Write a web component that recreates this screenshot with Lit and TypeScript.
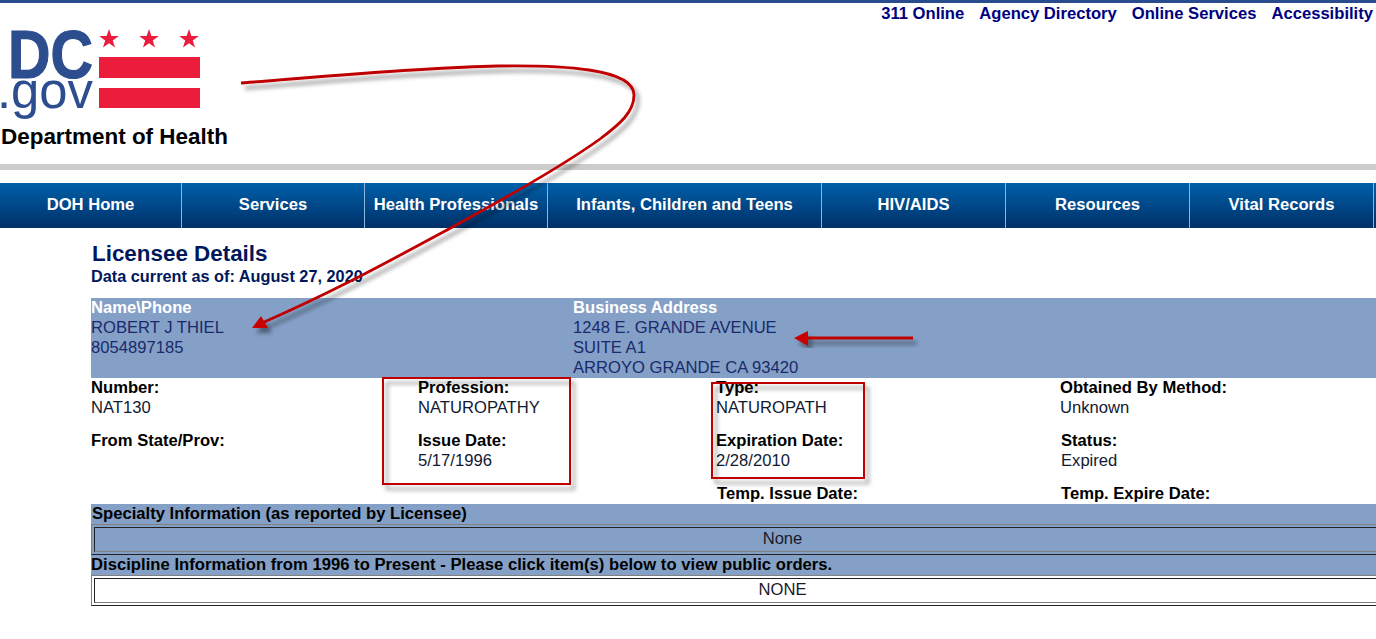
import { LitElement, html, css } from "lit";
import { customElement } from "lit/decorators.js";

const navItems: [string, number][] = [
  ["DOH Home", 182],
  ["Services", 183],
  ["Health Professionals", 183],
  ["Infants, Children and Teens", 274],
  ["HIV/AIDS", 184],
  ["Resources", 184],
  ["Vital Records", 184],
];

@customElement("app-root")
export class AppRoot extends LitElement {
  static styles = css`
    :host {
      display: block;
      position: relative;
      width: 100%;
      height: 639px;
      overflow: hidden;
      background: #fff;
      font-family: "Liberation Sans", Arial, sans-serif;
      font-size: 16.62px;
      line-height: 20px;
      color: #000;
    }
    .topbar { height: 3px; background: #2a4b8d; }
    .toplinks {
      display: flex;
      justify-content: flex-end;
      gap: 15px;
      height: 22px;
      padding: 0 3px 0 0;
      font-weight: bold;
      color: #00007f;
      line-height: 21px;
    }
    .logo { display: block; width: 210px; height: 95px; overflow: visible; }
    .logo .dc {
      font-family: "Liberation Sans", sans-serif;
      font-weight: bold;
      font-size: 69px;
      fill: #2c4d8e;
      stroke: #2c4d8e;
      stroke-width: 1.2px;
    }
    .logo .gov { font-family: "Liberation Sans", sans-serif; font-size: 52px; fill: #2c4d8e; }
    .logo .red { fill: #eb1c3c; }
    .dept {
      height: 44px;
      padding: 4px 0 0 1px;
      box-sizing: border-box;
      font-size: 22.45px;
      line-height: 26px;
      font-weight: bold;
    }
    .rule { height: 6px; background: #cccccc; margin-bottom: 13px; }
    .nav {
      display: flex;
      height: 45px;
      background: linear-gradient(#0060a9, #003068);
    }
    .nav-item {
      flex: none;
      box-sizing: border-box;
      display: flex;
      align-items: center;
      justify-content: center;
      padding-bottom: 2px;
      border-right: 1px solid #8db6dc;
      color: #fff;
      font-weight: bold;
      white-space: nowrap;
    }
    .main { padding: 13px 0 0 91px; }
    .title {
      font-size: 22.4px;
      line-height: 25px;
      font-weight: bold;
      color: #00175c;
      padding-left: 1px;
    }
    .current {
      font-weight: bold;
      line-height: 20px;
      color: #00175c;
      height: 32px;
      box-sizing: border-box;
      font-size: 16.3px;
    }
    .band { background: #84a0c6; color: #1a2a6c; }
    .addr {
      display: grid;
      grid-template-columns: 482px 1fr;
      height: 80px;
    }
    .addr b { color: #fff; display: block; }
    .details {
      display: grid;
      grid-template-columns: 327px 298px 344px 1fr;
      row-gap: 13px;
      grid-auto-rows: 40px;
      height: 126px;
    }
    .details b { display: block; }
    .details .val { color: #111a33; }
    .nudge { margin-left: 1px; }
    .sec-head {
      font-weight: bold;
      height: 20px;
      color: #000;
      padding-left: 1px;
    }
    .sec-head.tight { padding-left: 0; letter-spacing: 0.03px; }
    .tbl {
      box-sizing: border-box;
      width: 1383px;
      height: 31px;
      padding: 2px;
      border: 1px solid;
      border-color: #808080 #222 #222 #808080;
    }
    .cell {
      box-sizing: border-box;
      height: 25px;
      border: 1px solid;
      border-color: #222 #808080 #808080 #222;
      text-align: center;
      line-height: 22px;
    }
    .band .cell { color: #1a1a2a; }
    .white { background: #fff; color: #000; }
    .overlay {
      position: absolute;
      left: 0;
      top: 0;
      width: 1376px;
      height: 639px;
      pointer-events: none;
    }
    .ink { fill: none; stroke: #c00000; }
    .head { fill: #c80000; }
  `;

  render() {
    return html`
      <div class="topbar"></div>
      <div class="toplinks">
        <span>311 Online</span><span>Agency Directory</span><span>Online Services</span><span>Accessibility</span>
      </div>
      <svg class="logo" viewBox="0 25 210 95">
        <text class="dc" x="8" y="78" textLength="85" lengthAdjust="spacingAndGlyphs">DC</text>
        <text class="gov" x="-3" y="108" textLength="96" lengthAdjust="spacingAndGlyphs">.gov</text>
        <polygon class="red" points="109,29 111.4,36 118.8,36 112.8,40.4 115,47.5 109,43.2 103,47.5 105.2,40.4 99.2,36 106.6,36" />
        <polygon class="red" points="149,29 151.4,36 158.8,36 152.8,40.4 155,47.5 149,43.2 143,47.5 145.2,40.4 139.2,36 146.6,36" />
        <polygon class="red" points="189,29 191.4,36 198.8,36 192.8,40.4 195,47.5 189,43.2 183,47.5 185.2,40.4 179.2,36 186.6,36" />
        <rect class="red" x="99" y="57" width="101" height="21" />
        <rect class="red" x="99" y="88" width="101" height="20" />
      </svg>
      <div class="dept">Department of Health</div>
      <div class="rule"></div>
      <nav class="nav">
        ${navItems.map(
          ([t, w]) => html`<div class="nav-item" style="width:${w}px">${t}</div>`
        )}
      </nav>
      <div class="main">
        <div class="title">Licensee Details</div>
        <div class="current">Data current as of: August 27, 2020</div>
        <div class="band addr">
          <div><b>Name\\Phone</b>ROBERT J THIEL<br />8054897185</div>
          <div><b>Business Address</b>1248 E. GRANDE AVENUE<br />SUITE A1<br />ARROYO GRANDE CA 93420</div>
        </div>
        <div class="details">
          <div><b>Number:</b><span class="val">NAT130</span></div>
          <div><b>Profession:</b><span class="val">NATUROPATHY</span></div>
          <div><b>Type:</b><span class="val">NATUROPATH</span></div>
          <div><b>Obtained By Method:</b><span class="val">Unknown</span></div>
          <div><b>From State/Prov:</b></div>
          <div><b>Issue Date:</b><span class="val">5/17/1996</span></div>
          <div><b>Expiration Date:</b><span class="val">2/28/2010</span></div>
          <div class="nudge"><b>Status:</b><span class="val">Expired</span></div>
          <div></div>
          <div></div>
          <div class="nudge"><b>Temp. Issue Date:</b></div>
          <div class="nudge"><b>Temp. Expire Date:</b></div>
        </div>
        <div class="band">
          <div class="sec-head">Specialty Information (as reported by Licensee)</div>
          <div class="tbl"><div class="cell">None</div></div>
          <div class="sec-head tight">Discipline Information from 1996 to Present - Please click item(s) below to view public orders.</div>
          <div class="tbl white"><div class="cell">NONE</div></div>
        </div>
      </div>
      <svg class="overlay" viewBox="0 0 1376 639">
        <defs>
          <filter id="sh" x="-10%" y="-10%" width="120%" height="120%">
            <feDropShadow dx="4" dy="5" stdDeviation="2.2" flood-color="#000" flood-opacity="0.42" />
          </filter>
        </defs>
        <g filter="url(#sh)">
          <path class="ink" stroke-width="2.8" d="M241 83 C330 76 430 67 497 66 C560 65 634 68 634 95 C634 112 620 124 600 139 C575 157 530 185 447 230 C400 255 340 289 262 323" />
          <polygon class="head" points="252,328 261,316 268,328" />
        </g>
        <g filter="url(#sh)">
          <path class="ink" stroke-width="3" d="M913 338 H806" />
          <polygon class="head" points="794,338 808,331 808,346" />
        </g>
        <g filter="url(#sh)">
          <rect class="ink" stroke-width="2" x="383" y="378" width="187" height="106" />
        </g>
        <g filter="url(#sh)">
          <rect class="ink" stroke-width="2" x="712" y="383" width="152" height="95" />
        </g>
      </svg>
    `;
  }
}
